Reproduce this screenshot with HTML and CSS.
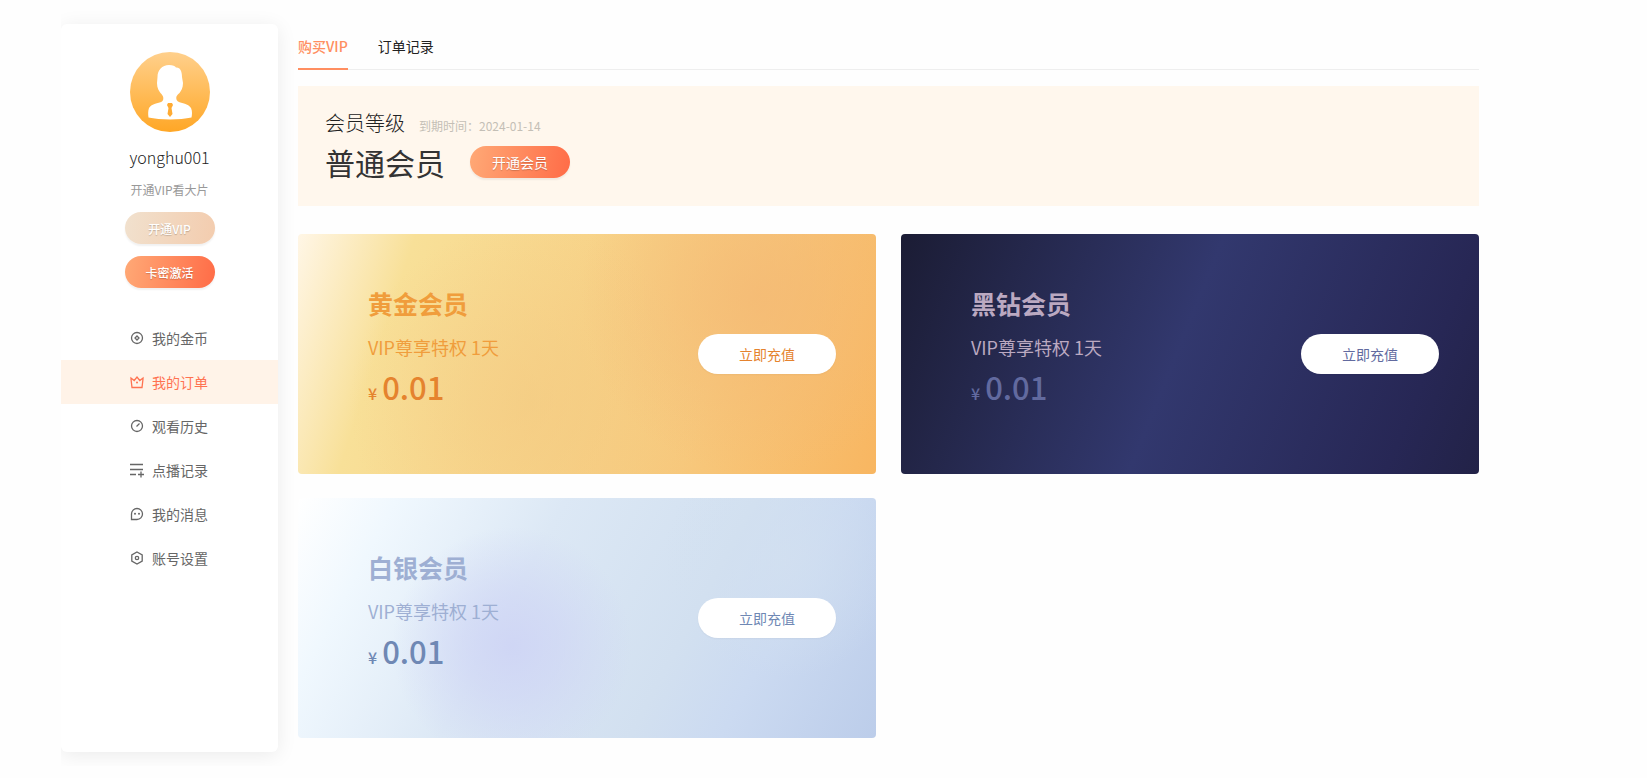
FILE: index.html
```html
<!DOCTYPE html>
<html lang="zh-CN">
<head>
    <meta charset="UTF-8">
    <meta name="viewport" content="width=device-width, initial-scale=1.0">
    <title>会员中心</title>
    <link rel="stylesheet" href="styles.css">
</head>
<body>
    <div class="container">
        <!-- Sidebar -->
        <aside class="sidebar">
            <svg class="avatar" viewBox="0 0 80 80" aria-hidden="true">
                <defs>
                    <linearGradient id="avatar-bg" x1="0" y1="0" x2="0" y2="1">
                        <stop offset="0" stop-color="#ffd08c"/>
                        <stop offset="1" stop-color="#ffa726"/>
                    </linearGradient>
                </defs>
                <circle cx="40" cy="40" r="40" fill="url(#avatar-bg)"/>
                <path fill="#fff" d="M39 13C43 13 45 14 46 15.500C50 15 52 19 52 25L53 31C53 36 51 39 49.500 41C45 44 46 48 48 49.500C52 52 58 51 61 56C62.500 59 62 63 61.500 65.500C50 68 30 68 18.500 65.500C18 62 18 59 19 56C22 51 28 52 32 49.500C34 48 34 44 30.500 41C29 39 27 36 27 31L27.500 25C27.500 18 32 13 39 13Z"/>
                <path fill="#ffab33" d="M38 51h4l1 2-1.500 3 1 6-2.500 3-2.500-3 1-6-1.500-3z"/>
            </svg>
            <div class="user-name">yonghu001</div>
            <div class="user-desc">开通VIP看大片</div>
            <button type="button" class="pill pill-side pill-muted">开通VIP</button>
            <button type="button" class="pill pill-side">卡密激活</button>

            <nav class="menu">
                <a href="#" class="menu-item">
                    <svg class="icon" viewBox="0 0 14 14"><circle cx="7" cy="7" r="5.500"/><path d="M7 5L9 7 7 9 5 7z"/></svg>
                    <span>我的金币</span>
                </a>
                <a href="#" class="menu-item active">
                    <svg class="icon" viewBox="0 0 14 14"><path d="M1 3v1l1 8.500h10L13 4V3L9.800 5.500 7 2 4.200 5.500z"/><circle class="dot" cx="7" cy="7.500" r="1"/></svg>
                    <span>我的订单</span>
                </a>
                <a href="#" class="menu-item">
                    <svg class="icon" viewBox="0 0 14 14"><circle cx="7" cy="7" r="5.500"/><path d="M6.500 7.500L9.500 4.500"/></svg>
                    <span>观看历史</span>
                </a>
                <a href="#" class="menu-item">
                    <svg class="icon" viewBox="0 0 14 14"><path d="M0 1.500h13M0 6.500h13M0 11.500h6M8 11.500h6M11 8.500v6"/></svg>
                    <span>点播记录</span>
                </a>
                <a href="#" class="menu-item">
                    <svg class="icon" viewBox="0 0 14 14"><path d="M1.500 12.500V7A5.500 5.500 0 1 1 7 12.500z"/><circle class="dot" cx="5" cy="6.800" r="1"/><circle class="dot" cx="9" cy="6.800" r="1"/></svg>
                    <span>我的消息</span>
                </a>
                <a href="#" class="menu-item">
                    <svg class="icon" viewBox="0 0 14 14"><path d="M7 1l5.200 3v6L7 13 1.800 10V4z"/><circle cx="7" cy="7" r="1.700"/></svg>
                    <span>账号设置</span>
                </a>
            </nav>
        </aside>

        <!-- Main content -->
        <main class="main">
            <nav class="tabs">
                <a href="#" class="tab active">购买VIP</a>
                <a href="#" class="tab">订单记录</a>
            </nav>

            <section class="level">
                <div class="level-top">
                    <span class="level-label">会员等级</span>
                    <span class="level-date">到期时间：2024-01-14</span>
                </div>
                <div class="level-bottom">
                    <span class="level-name">普通会员</span>
                    <button type="button" class="pill pill-level">开通会员</button>
                </div>
            </section>

            <div class="cards">
                <section class="card card-gold">
                    <div class="card-info">
                        <h2 class="card-title">黄金会员</h2>
                        <p class="card-desc">VIP尊享特权 1天</p>
                        <p class="card-price"><small>¥</small>0.01</p>
                    </div>
                    <button type="button" class="card-btn">立即充值</button>
                </section>
                <section class="card card-black">
                    <div class="card-info">
                        <h2 class="card-title">黑钻会员</h2>
                        <p class="card-desc">VIP尊享特权 1天</p>
                        <p class="card-price"><small>¥</small>0.01</p>
                    </div>
                    <button type="button" class="card-btn">立即充值</button>
                </section>
                <section class="card card-silver">
                    <div class="card-info">
                        <h2 class="card-title">白银会员</h2>
                        <p class="card-desc">VIP尊享特权 1天</p>
                        <p class="card-price"><small>¥</small>0.01</p>
                    </div>
                    <button type="button" class="card-btn">立即充值</button>
                </section>
            </div>
        </main>
    </div>
</body>
</html>
```

FILE: styles.css
```css
/* General Reset */
* {
    box-sizing: border-box;
}

body {
    margin: 0;
    font-family: "Noto Sans CJK SC", sans-serif;
    font-size: 14px;
    color: #333;
    background: #fefefe;
}

a {
    color: inherit;
    text-decoration: none;
}

button {
    font-family: inherit;
    border: none;
    cursor: pointer;
}

h2,
p {
    margin: 0;
}

.container {
    display: flex;
    gap: 20px;
    margin: 0 168px 0 61px;
    padding: 24px 0 14px;
    overflow: hidden;
}

/* Sidebar */
.sidebar {
    flex: 0 0 217px;
    min-height: 728px;
    padding-top: 28px;
    display: flex;
    flex-direction: column;
    align-items: center;
    background: #fff;
    border-radius: 6px;
    box-shadow: 0 3px 20px rgba(0, 0, 0, 0.08);
}

.avatar {
    width: 80px;
    height: 80px;
}

.user-name {
    margin-top: 13px;
    font-size: 16px;
    font-weight: 300;
    line-height: 24px;
    color: #222;
}

.user-desc {
    margin: 11px 0 12px;
    font-size: 12px;
    line-height: 20px;
    color: #999;
}

.pill {
    height: 32px;
    padding: 0;
    border-radius: 16px;
    color: #fff;
    background: linear-gradient(100deg, #ffa976, #ff6c47);
    box-shadow: 0 2px 2px rgba(0, 0, 0, 0.06);
    text-shadow: 0 1px 1px rgba(0, 0, 0, 0.2);
}

.pill-side {
    width: 90px;
    margin-bottom: 12px;
    font-size: 12px;
    font-weight: 500;
}

.pill-muted {
    background: linear-gradient(100deg, #f1e1ce, #f3ccae);
}

/* Menu */
.menu {
    width: 100%;
    margin-top: 16px;
}

.menu-item {
    display: flex;
    align-items: center;
    justify-content: center;
    gap: 8px;
    height: 44px;
    padding: 0 1px 1px 0;
    color: #666;
}

.menu-item.active {
    color: #ff7250;
    background: #fff3e8;
}

.icon {
    width: 14px;
    height: 14px;
    fill: none;
    stroke: currentColor;
    stroke-width: 1.3;
    overflow: visible;
}

.icon .dot {
    fill: currentColor;
    stroke: none;
}

/* Tabs */
.main {
    flex: 1;
    min-width: 0;
}

.tabs {
    display: flex;
    gap: 30px;
    height: 46px;
    box-shadow: inset 0 -1px #eee;
}

.tab {
    line-height: 44px;
    color: #222;
}

.tab.active {
    font-weight: 500;
    color: #ff8e60;
    border-bottom: 2px solid #ff8e60;
}

/* Member level */
.level {
    margin: 16px 0 28px;
    padding: 23px 27px;
    height: 120px;
    background: #fff7ed;
}

.level-top {
    display: flex;
    align-items: baseline;
    gap: 14px;
    line-height: 28px;
}

.level-label {
    font-size: 20px;
    font-weight: 300;
    color: #222;
}

.level-date {
    font-size: 12px;
    color: #c4bfb6;
}

.level-bottom {
    display: flex;
    align-items: center;
    gap: 25px;
    height: 44px;
}

.level-name {
    font-size: 30px;
    line-height: 40px;
}

.pill-level {
    width: 100px;
    font-size: 14px;
}

/* Cards */
.cards {
    display: grid;
    grid-template-columns: 1fr 1fr;
    gap: 24px 25px;
}

.card {
    display: flex;
    align-items: center;
    justify-content: space-between;
    height: 240px;
    padding: 0 40px 0 70px;
    border-radius: 4px;
}

.card-info {
    padding-bottom: 8px;
}

.card-title {
    font-size: 25px;
    line-height: 40px;
}

.card-desc {
    margin-top: 8px;
    font-size: 18px;
    line-height: 32px;
}

.card-price {
    font-size: 31px;
    font-weight: 500;
    line-height: 48px;
}

.card-price small {
    margin-right: 5px;
    font-size: 16px;
}

.card-btn {
    width: 138px;
    height: 40px;
    border-radius: 20px;
    font-size: 14px;
    background: #fff;
    box-shadow: 0 1px 2px rgba(0, 0, 0, 0.04);
}

.card-gold {
    color: #f09d3c;
    background:
        radial-gradient(circle at 80% 26%, rgba(244, 184, 116, 0.7), rgba(244, 184, 116, 0) 180px),
        radial-gradient(circle at 40% 70%, rgba(243, 202, 130, 0.6), rgba(243, 202, 130, 0) 180px),
        linear-gradient(108deg, #fff6e6, #f8e098 18%, #f7c87c 70%, #f8b661);
}

.card-gold .card-price,
.card-gold .card-btn {
    color: #e5832e;
}

.card-black {
    color: #bba9c1;
    background: linear-gradient(112deg, #1b1c34, #32386e 48%, #272755 86%, #222247);
}

.card-black .card-price,
.card-black .card-btn {
    color: #626a9f;
}

.card-silver {
    color: #9eafd3;
    background:
        radial-gradient(circle at 37% 62%, rgba(206, 212, 245, 0.9), rgba(206, 212, 245, 0.6) 50px, rgba(206, 212, 245, 0) 120px),
        radial-gradient(circle at 84% 25%, rgba(210, 224, 240, 0.8), rgba(210, 224, 240, 0) 120px),
        linear-gradient(118deg, #fff, #f0f8fe 14%, #dce8f5 38%, #d2e0f0 65%, #cbdaf1 78%, #bccdea);
}

.card-silver .card-price,
.card-silver .card-btn {
    color: #6f88b4;
}
```
